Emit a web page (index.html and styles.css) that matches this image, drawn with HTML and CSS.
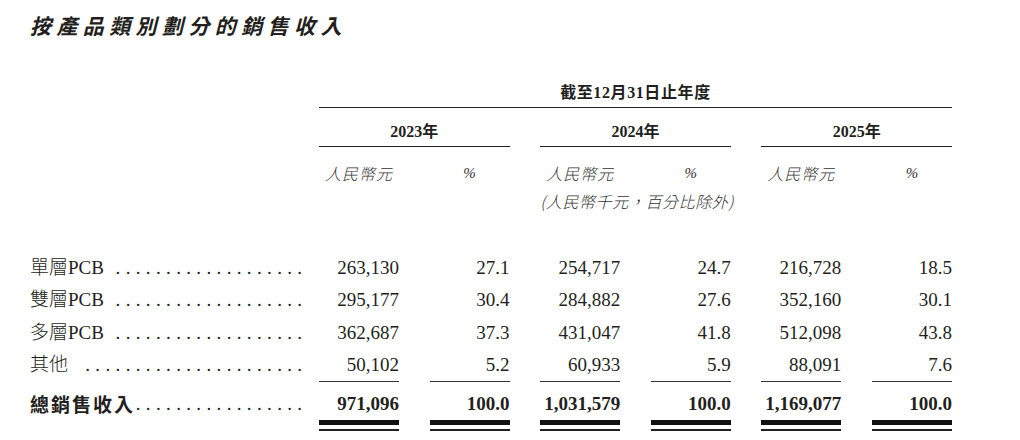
FILE: index.html
```html
<!DOCTYPE html>
<html lang="zh-Hant">
<head>
<meta charset="utf-8">
<title>按產品類別劃分的銷售收入</title>
<link rel="stylesheet" href="styles.css">
</head>
<body>
<div class="page">
  <h1 class="title">按產品類別劃分的銷售收入</h1>
  <div class="grid">
    <div class="period">截至12月31日止年度</div>

    <div class="year y1">2023年</div>
    <div class="year y2">2024年</div>
    <div class="year y3">2025年</div>

    <div class="unit first">人民幣元</div>
    <div class="unit pct">%</div>
    <div class="unit">人民幣元</div>
    <div class="unit pct">%</div>
    <div class="unit">人民幣元</div>
    <div class="unit pct">%</div>

    <div class="note">(人民幣千元，百分比除外)</div>

    <div class="lab"><span class="name">單層PCB</span><span class="dots">. . . . . . . . . . . . . . . . . . .</span></div>
    <div class="num">263,130</div><div class="num">27.1</div>
    <div class="num">254,717</div><div class="num">24.7</div>
    <div class="num">216,728</div><div class="num">18.5</div>

    <div class="lab"><span class="name">雙層PCB</span><span class="dots">. . . . . . . . . . . . . . . . . . .</span></div>
    <div class="num">295,177</div><div class="num">30.4</div>
    <div class="num">284,882</div><div class="num">27.6</div>
    <div class="num">352,160</div><div class="num">30.1</div>

    <div class="lab"><span class="name">多層PCB</span><span class="dots">. . . . . . . . . . . . . . . . . . .</span></div>
    <div class="num">362,687</div><div class="num">37.3</div>
    <div class="num">431,047</div><div class="num">41.8</div>
    <div class="num">512,098</div><div class="num">43.8</div>

    <div class="lab"><span class="name">其他</span><span class="dots">. . . . . . . . . . . . . . . . . . . . . .</span></div>
    <div class="num sub">50,102</div><div class="num sub">5.2</div>
    <div class="num sub">60,933</div><div class="num sub">5.9</div>
    <div class="num sub">88,091</div><div class="num sub">7.6</div>

    <div class="lab total"><span class="name">總銷售收入</span><span class="dots">. . . . . . . . . . . . . . . . .</span></div>
    <div class="num total"><span class="val">971,096</span></div><div class="num total"><span class="val">100.0</span></div>
    <div class="num total"><span class="val">1,031,579</span></div><div class="num total"><span class="val">100.0</span></div>
    <div class="num total"><span class="val">1,169,077</span></div><div class="num total"><span class="val">100.0</span></div>
  </div>
</div>
</body>
</html>
```

FILE: styles.css
```css
html, body {
  margin: 0;
  padding: 0;
  background: #ffffff;
}

body {
  color: #231f20;
  font-family: "Liberation Serif", "Noto Sans CJK TC", serif;
}

.page {
  width: 1020px;
  height: 440px;
  box-sizing: border-box;
  padding: 11px 0 0 30px;
  overflow: hidden;
}

.title {
  margin: 0;
  font-family: "Noto Sans CJK TC", sans-serif;
  font-size: 21px;
  line-height: 28px;
  font-weight: 700;
  font-style: italic;
  letter-spacing: 5.4px;
}

.grid {
  margin-top: 41px;
  display: grid;
  grid-template-columns: 258.4px repeat(6, 80px);
  column-gap: 30.6px;
  align-items: start;
}

.period {
  grid-column: 2 / 8;
  text-align: center;
  font-weight: 700;
  font-size: 16px;
  line-height: 20px;
  padding: 3px 0 4px;
  border-bottom: 1px solid #222;
  letter-spacing: 0.6px;
}

.year {
  text-align: center;
  font-weight: 700;
  font-size: 16px;
  line-height: 20px;
  padding: 14px 0 4px;
  border-bottom: 1px solid #222;
}
.y1 { grid-column: 2 / 4; }
.y2 { grid-column: 4 / 6; }
.y3 { grid-column: 6 / 8; }

.unit {
  text-align: center;
  font-family: "Noto Sans CJK TC", sans-serif;
  font-style: italic;
  font-weight: 300;
  font-size: 16px;
  line-height: 20px;
  letter-spacing: 1px;
  padding: 16px 0 8px;
  color: #333;
}
.unit.first { grid-column-start: 2; }
.unit.pct {
  font-family: "Liberation Serif", serif;
  font-size: 15px;
  letter-spacing: 0;
}

.note {
  grid-column: 4 / 6;
  text-align: center;
  font-family: "Noto Sans CJK TC", sans-serif;
  font-style: italic;
  font-weight: 300;
  font-size: 16px;
  line-height: 20px;
  letter-spacing: 0.6px;
  padding-bottom: 41px;
  color: #333;
  white-space: nowrap;
}

.lab {
  grid-column-start: 1;
  display: flex;
  margin-right: -14px;
  font-size: 19px;
  line-height: 32.3px;
  font-weight: 300;
  white-space: nowrap;
}
.lab .name {
  margin-right: 5px;
}
.dots {
  flex: 1;
  min-width: 0;
  text-align: right;
  white-space: nowrap;
  letter-spacing: 0.3px;
}

.num {
  text-align: right;
  font-size: 19px;
  line-height: 32.3px;
}
.num.sub {
  border-bottom: 1px solid #333;
}

.lab.total,
.num.total {
  padding-top: 10px;
  line-height: 24px;
}
.lab.total .name {
  font-family: "Noto Sans CJK TC", sans-serif;
  font-weight: 700;
  letter-spacing: 2px;
  margin-right: 0;
}
.num.total {
  font-weight: 700;
  padding-bottom: 4px;
  border-bottom: 2px solid #222;
}
.num.total .val {
  display: block;
  padding-bottom: 4px;
  border-bottom: 5px solid #111;
}
```
